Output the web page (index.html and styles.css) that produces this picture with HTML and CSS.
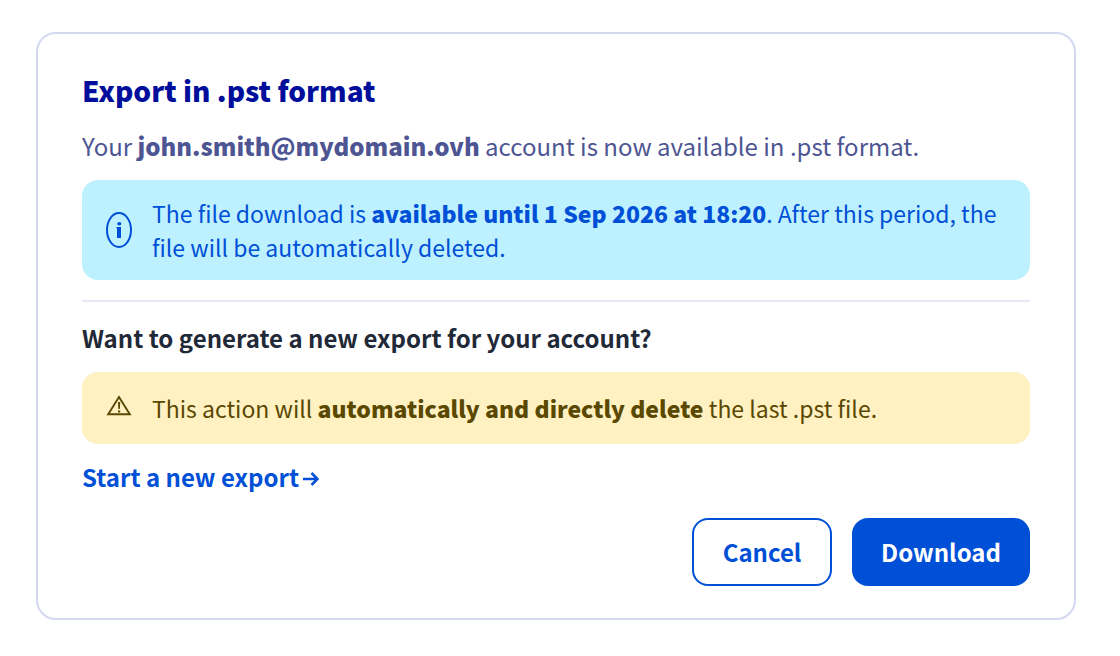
FILE: index.html
```html
<!DOCTYPE html>
<html lang="en">
<head>
  <meta charset="utf-8"/>
  <meta name="viewport" content="width=device-width, initial-scale=1"/>
  <title>Export in .pst format</title>
  <link rel="stylesheet" href="styles.css">
</head>
<body>

  <!-- ---------- EXPORT DIALOG ---------- -->
  <main class="modal">
    <h1>Export in .pst format</h1>
    <p class="intro">Your <strong>john.smith@mydomain.ovh</strong> account is now available in .pst format.</p>

    <!-- Download availability -->
    <div class="message message-info">
      <svg class="icon-info" viewBox="0 0 26 36" aria-hidden="true">
        <ellipse cx="13" cy="18" rx="12" ry="17" fill="none" stroke="currentColor" stroke-width="2"/>
        <ellipse cx="13.300" cy="11.700" rx="2.100" ry="1.800" fill="currentColor"/>
        <path d="M11 15h4v11h-4v-9.500h-.5V15z" fill="currentColor"/>
      </svg>
      <p>The file download is <strong>available until 1 Sep 2026 at 18:20</strong>. After this period, the file will be automatically deleted.</p>
    </div>

    <hr>

    <!-- New export -->
    <h2>Want to generate a new export for your account?</h2>
    <div class="message message-warning">
      <svg class="icon-warning" viewBox="0 0 26 26" aria-hidden="true">
        <path d="M13 2L23.800 19.200H2.200z" fill="none" stroke="currentColor" stroke-width="1.900"/>
        <path d="M12 7h2.200l-.3 7h-1.600zM12 15.500h2.200v2h-2.200z" fill="currentColor"/>
      </svg>
      <p>This action will <strong>automatically and directly delete</strong> the last .pst file.</p>
    </div>
    <a href="#" class="link">Start a new export
      <svg class="icon-arrow" viewBox="0 0 16 18" aria-hidden="true">
        <path d="M0 11h14M8.500 5L14.500 11L8.500 17" fill="none" stroke="currentColor" stroke-width="2.500"/>
      </svg>
    </a>

    <div class="actions">
      <button type="button" class="btn btn-outline">Cancel</button>
      <button type="button" class="btn btn-primary">Download</button>
    </div>
  </main>

</body>
</html>
```
FILE: styles.css
```css
/* Basic reset */
* {
  box-sizing: border-box;
  margin: 0;
  padding: 0;
}
body {
  font-family: "Noto Sans CJK SC", "Open Sans", sans-serif;
  font-size: 24px;
  line-height: 34px;
  background: #fff;
  color: #4d5592;
}
strong {
  font-weight: 900;
}

/* ---------- DIALOG ---------- */
.modal {
  margin: 32px 44px 36px 36px;
  padding: 38px 44px 32px;
  border: 2px solid #d4d8f0;
  border-radius: 20px;
}
h1 {
  margin-bottom: 20px;
  color: #000e9c;
  font-size: 28px;
  font-weight: 900;
  line-height: 36px;
}
.intro {
  margin-bottom: 16px;
  line-height: 36px;
}
hr {
  margin: 20px 0;
  border: 0;
  border-top: 2px solid #e6e8f8;
}
h2 {
  margin-bottom: 18px;
  color: #1f2937;
  font-size: 24px;
  font-weight: 700;
  line-height: 32px;
}

/* ---------- MESSAGES ---------- */
.message {
  display: flex;
  align-items: center;
  gap: 20px;
  padding: 16px 24px;
  border-radius: 16px;
  font-size: 23px;
}
.message svg {
  flex: none;
  width: 26px;
}
.message-info {
  background: #bef1ff;
  color: #0050d7;
}
.message-warning {
  background: #fff1c2;
  color: #5a4800;
  line-height: 40px;
}
.icon-info {
  height: 36px;
}
.icon-warning {
  height: 26px;
}

/* ---------- LINK + BUTTONS ---------- */
.link {
  display: flex;
  align-items: center;
  gap: 4px;
  width: fit-content;
  margin: 16px 0 24px;
  color: #0050d7;
  font-weight: 700;
  text-decoration: none;
}
.icon-arrow {
  width: 16px;
  height: 18px;
}
.actions {
  display: flex;
  justify-content: flex-end;
  gap: 20px;
}
.btn {
  min-width: 140px;
  padding: 14px 27px;
  border: 2px solid #0050d7;
  border-radius: 16px;
  font-family: inherit;
  font-size: 24px;
  font-weight: 700;
  line-height: 36px;
  cursor: pointer;
}
.btn-outline {
  background: #fff;
  color: #0050d7;
}
.btn-primary {
  background: #0050d7;
  color: #fff;
}
```
